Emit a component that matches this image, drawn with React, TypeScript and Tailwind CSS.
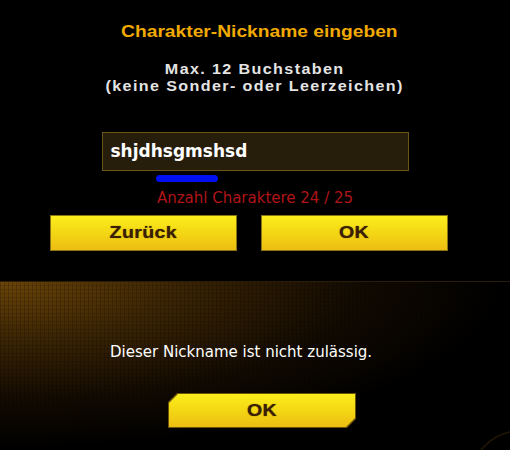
import React from "react";

const yellow = "bg-[linear-gradient(180deg,#fbee1c_0%,#f3d414_55%,#ecbd12_100%)]";
const label = "inline-block scale-x-[1.15] font-['Liberation_Sans',Arial,sans-serif] text-[17px] font-bold tracking-[0.3px] text-[#3a1f02] [text-shadow:0_0_1px_#6a4a05]";

function YellowButton({ text }: { text: string }) {
    return (
        <div className={`flex h-[36px] w-[187px] items-center justify-center border border-[#8a7414] ${yellow}`}>
            <span className={label}>{text}</span>
        </div>
    );
}

function ChamferButton({ text }: { text: string }) {
    const shape = "[clip-path:polygon(9px_0,100%_0,100%_calc(100%-9px),calc(100%-9px)_100%,0_100%,0_9px)]";
    return (
        <div className={`h-[35px] w-[188px] bg-[#6a5408] p-px ${shape}`}>
            <div className={`flex h-full w-full items-center justify-center ${yellow} ${shape}`}>
                <span className={label}>{text}</span>
            </div>
        </div>
    );
}

export default function App() {
    return (
        <div className="flex h-[450px] w-[510px] flex-col overflow-hidden bg-black">
            <div className="flex h-[281px] flex-col items-center">
                <h1 className="ml-[9px] mt-[22px] inline-block scale-x-[1.13] font-['Liberation_Sans',Arial,sans-serif] text-[17px] font-bold leading-[20px] text-[#f2a900]">
                    Charakter-Nickname eingeben
                </h1>
                <div className="mt-[19px] scale-x-[1.15] text-center font-['Liberation_Sans',Arial,sans-serif] text-[14px] font-bold leading-[17px] tracking-[1.2px] text-[#e4e4e4]">
                    <div>Max. 12 Buchstaben</div>
                    <div>(keine Sonder- oder Leerzeichen)</div>
                </div>
                <div className="mt-[37px] flex h-[39px] w-[307px] items-center border border-[#6a5418] bg-[#271d0b] px-[8px]">
                    <span className="font-['DejaVu_Sans',Verdana,sans-serif] text-[17px] font-bold text-white">shjdhsgmshsd</span>
                </div>
                <div className="mt-[4px] flex w-[307px]">
                    <div className="ml-[54px] h-[7px] w-[62px] rounded-full bg-[#0010f0]" />
                </div>
                <div className="mt-[6px] font-['DejaVu_Sans',Tahoma,sans-serif] text-[15px] leading-[20px] text-[#b01418]">
                    Anzahl Charaktere 24 / 25
                </div>
                <div className="ml-[50px] mt-[7px] flex gap-[24px] self-start">
                    <YellowButton text="Zurück" />
                    <YellowButton text="OK" />
                </div>
            </div>
            <div className="relative flex flex-1 flex-col border-t border-[#2a1c06] bg-[radial-gradient(ellipse_at_0%_0%,#6a4408_0%,#3a2404_25%,#120a01_50%,#000_70%)]">
                <div className="pointer-events-none absolute inset-0 bg-[repeating-linear-gradient(90deg,rgba(0,0,0,0.18)_0px,rgba(0,0,0,0.18)_1px,transparent_1px,transparent_4px),repeating-linear-gradient(0deg,rgba(0,0,0,0.12)_0px,rgba(0,0,0,0.12)_1px,transparent_1px,transparent_4px)]" />
                <div className="pointer-events-none absolute -bottom-[80px] -right-[60px] h-[100px] w-[100px] rounded-full border-[2px] border-[#1c1403]" />
                <p className="relative ml-[110px] mt-[60px] self-start font-['DejaVu_Sans',Tahoma,sans-serif] text-[15px] leading-[20px] text-white">
                    Dieser Nickname ist nicht zulässig.
                </p>
                <div className="relative ml-[168px] mt-[31px] self-start">
                    <ChamferButton text="OK" />
                </div>
            </div>
        </div>
    );
}
